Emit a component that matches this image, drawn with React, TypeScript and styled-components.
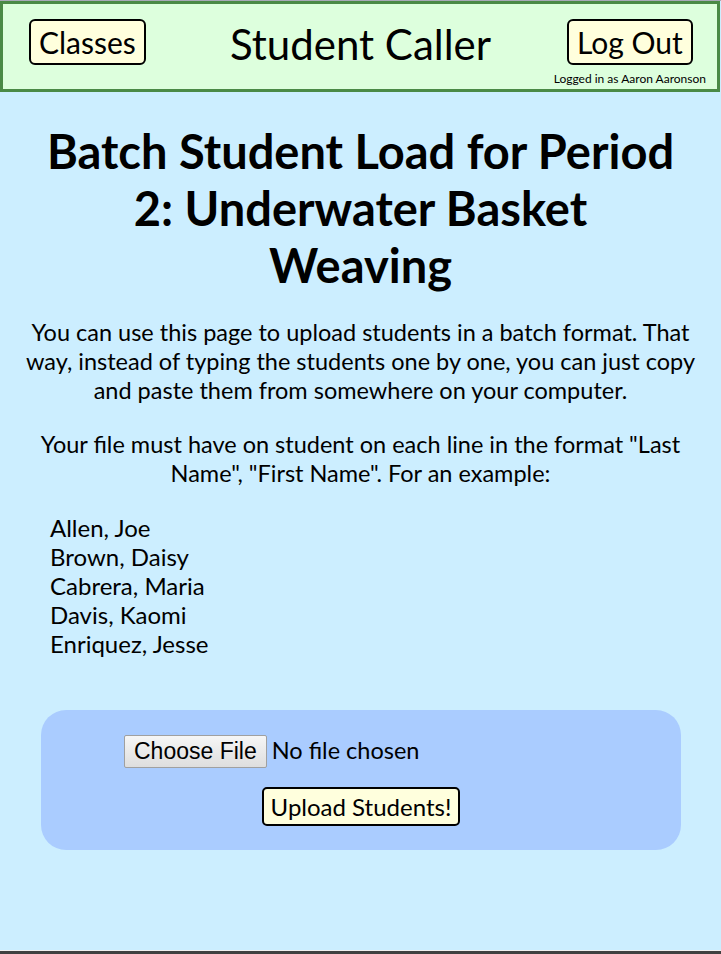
import { FunctionComponent } from "react";
import styled, { createGlobalStyle } from "styled-components";

const GlobalStyle = createGlobalStyle`
  html, body {
    margin: 0;
    padding: 0;
    background-color: #cceeff;
    font-family: Lato, "Open Sans", sans-serif;
    color: #000;
  }
`;

const students = ["Allen, Joe", "Brown, Daisy", "Cabrera, Maria", "Davis, Kaomi", "Enriquez, Jesse"];

const App: FunctionComponent = () => {
  return (
    <Page>
      <GlobalStyle />
      <Header>
        <HeaderLeft>
          <YellowButton>Classes</YellowButton>
        </HeaderLeft>
        <SiteTitle>Student Caller</SiteTitle>
        <HeaderRight>
          <YellowButton>Log Out</YellowButton>
          <LoggedIn>Logged in as Aaron Aaronson</LoggedIn>
        </HeaderRight>
      </Header>
      <Main>
        <Title>Batch Student Load for Period 2: Underwater Basket Weaving</Title>
        <Text>
          You can use this page to upload students in a batch format. That way, instead of typing the students one by
          one, you can just copy and paste them from somewhere on your computer.
        </Text>
        <Text>
          Your file must have on student on each line in the format "Last Name", "First Name". For an example:
        </Text>
        <ExampleList>
          {students.map((s) => (
            <ExampleLine key={s}>{s}</ExampleLine>
          ))}
        </ExampleList>
        <UploadForm onSubmit={(e) => e.preventDefault()}>
          <FileInput type="file" />
          <UploadButton type="submit">Upload Students!</UploadButton>
        </UploadForm>
      </Main>
      <Footer />
    </Page>
  );
};

const Page = styled.div`
  display: flex;
  flex-direction: column;
  min-height: calc(100vh + 35px);
  border-top: 1px solid #a8a8b8;
`;

const Header = styled.header`
  display: grid;
  grid-template-columns: 1fr auto 1fr;
  align-items: start;
  width: 720px;
  box-sizing: border-box;
  height: 91px;
  padding: 15px 11px 0 12px;
  background-color: #ddffdd;
  border: 3px solid #4a8a46;
`;

const HeaderLeft = styled.div`
  justify-self: start;
  padding-left: 14px;
`;

const HeaderRight = styled.div`
  justify-self: end;
  display: flex;
  flex-direction: column;
  align-items: center;
`;

const SiteTitle = styled.div`
  font-size: 42px;
  line-height: 50px;
`;

const YellowButton = styled.button`
  font-family: Lato, sans-serif;
  font-size: 30px;
  line-height: 34px;
  padding: 4px 8px;
  color: #000;
  background-color: #ffffdd;
  border: 2px solid #000;
  border-radius: 6px;
  cursor: pointer;
`;

const LoggedIn = styled.div`
  font-size: 12px;
  line-height: 14px;
  margin-top: 7px;
`;

const Main = styled.main`
  flex: 1;
  width: 670px;
  margin: 0 auto;
`;

const Title = styled.h1`
  font-size: 47px;
  line-height: 57px;
  font-weight: 700;
  text-align: center;
  margin: 31px auto 24px;
  max-width: 636px;
`;

const Text = styled.p`
  font-size: 23.5px;
  line-height: 29px;
  text-align: center;
  margin: 0 0 25px;
`;

const ExampleList = styled.div`
  padding-left: 24.5px;
  margin-top: 19px;
`;

const ExampleLine = styled.div`
  font-size: 24px;
  line-height: 29px;
`;

const UploadForm = styled.form`
  display: flex;
  flex-direction: column;
  align-items: center;
  gap: 19px;
  width: 640px;
  box-sizing: border-box;
  margin: 52px 0 0 15.5px;
  padding: 25px 0 24px;
  background-color: #aaccff;
  border-radius: 25px;
`;

const FileInput = styled.input`
  width: 474px;
  font-family: Lato, sans-serif;
  font-size: 23.5px;
  color: #000;

  &::file-selector-button {
    font-family: "Liberation Sans", Arial, sans-serif;
    font-size: 23px;
    padding: 2px 9px;
    margin-right: 5px;
    color: #000;
    background: linear-gradient(#f6f6f6, #dedede);
    border: 1px solid #a0a0a0;
    border-radius: 2px;
  }
`;

const UploadButton = styled.button`
  font-family: Lato, sans-serif;
  font-size: 24px;
  line-height: 27px;
  padding: 4px 7px;
  color: #000;
  background-color: #ffffdd;
  border: 2px solid #000;
  border-radius: 5px;
  cursor: pointer;
`;

const Footer = styled.footer`
  height: 40px;
  box-sizing: border-box;
  border-top: 1px solid #f0f0f0;
  background-color: #404040;
`;

export default App;
